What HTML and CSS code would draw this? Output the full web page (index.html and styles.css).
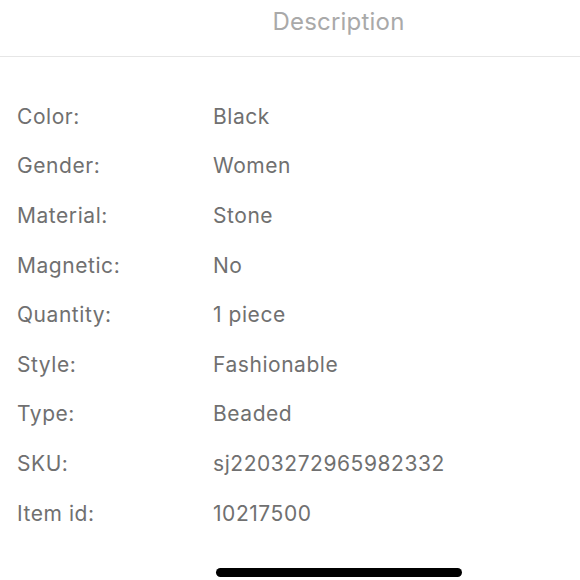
FILE: index.html
```html
<!DOCTYPE html>
<html>
<head>
<meta charset="utf-8">
<link rel="stylesheet" href="styles.css">
</head>
<body>
<div class="screen">
  <header class="header"><h1 class="title">Description</h1></header>
  <dl class="specs">
    <div class="row"><dt>Color:</dt><dd>Black</dd></div>
    <div class="row"><dt>Gender:</dt><dd>Women</dd></div>
    <div class="row"><dt>Material:</dt><dd>Stone</dd></div>
    <div class="row"><dt>Magnetic:</dt><dd>No</dd></div>
    <div class="row"><dt>Quantity:</dt><dd>1 piece</dd></div>
    <div class="row"><dt>Style:</dt><dd>Fashionable</dd></div>
    <div class="row"><dt>Type:</dt><dd>Beaded</dd></div>
    <div class="row"><dt>SKU:</dt><dd>sj2203272965982332</dd></div>
    <div class="row"><dt>Item id:</dt><dd>10217500</dd></div>
  </dl>
  <div class="home-bar-wrap"><div class="home-bar"></div></div>
</div>
</body>
</html>
```
FILE: styles.css
```css
* { box-sizing: border-box; }
html, body { margin: 0; padding: 0; background: #fff; }
body { font-family: Inter, "Noto Sans", sans-serif; }
.screen { width: 580px; height: 580px; display: flex; flex-direction: column; overflow: hidden; }
.header {
  height: 57px;
  border-bottom: 1px solid #e6e6e6;
  display: flex;
  justify-content: center;
  align-items: center;
  padding-left: 97px;
}
.title { margin: 0; font-weight: 400; font-size: 24px; letter-spacing: 0.2px; color: #a9a9a9; padding-bottom: 12px; line-height: 30px; }
.specs { margin: 0; padding: 35px 0 0 17px; display: flex; flex-direction: column; }
.row { display: flex; height: 49.6px; align-items: center; }
.row dt { width: 196px; margin: 0; }
.row dd { margin: 0; }
.row dt, .row dd { font-size: 21px; letter-spacing: 0.55px; color: #707070; line-height: 24px; }
.home-bar-wrap { flex: 1; display: flex; justify-content: center; align-items: flex-end; padding: 0 0 3px 97px; }
.home-bar { width: 246px; height: 9px; border-radius: 5px; background: #000; }
```
